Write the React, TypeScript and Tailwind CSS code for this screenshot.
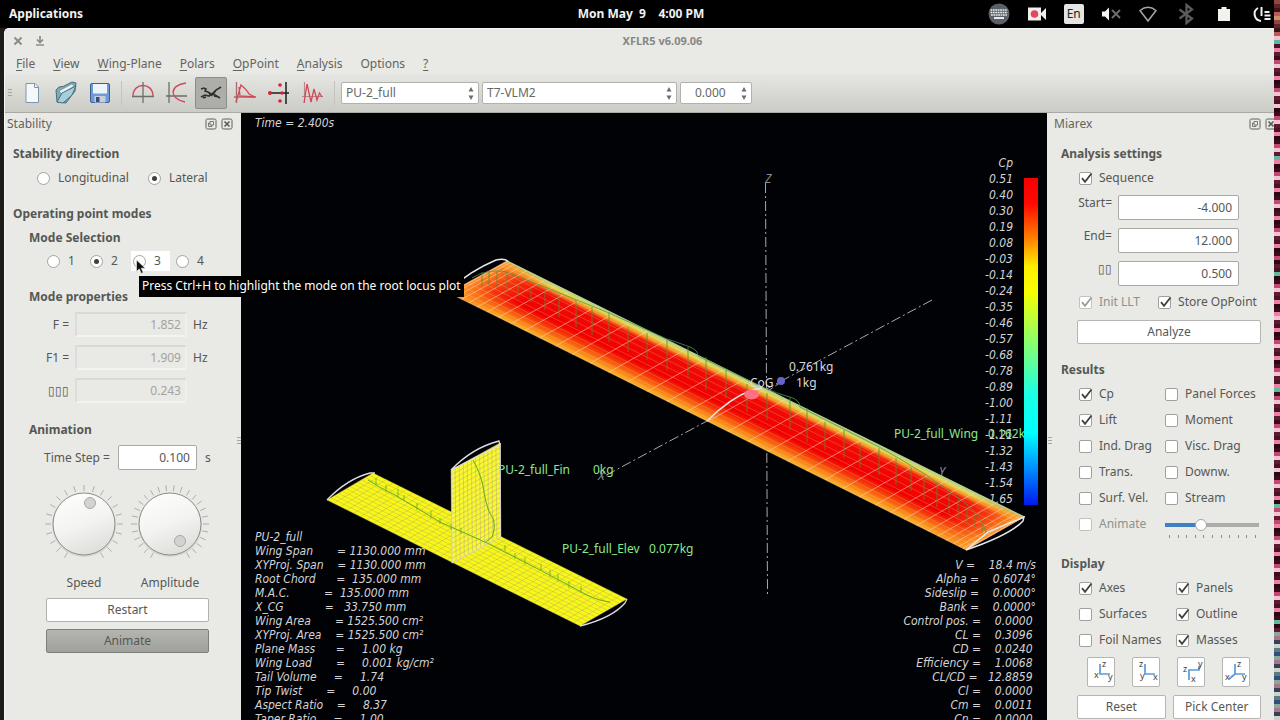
import { useState } from 'react';
import type { ReactNode } from 'react';

interface Point { x: number; y: number }

const MENUS = ['File', 'View', 'Wing-Plane', 'Polars', 'OpPoint', 'Analysis'];

const CP_SCALE = [
  '0.51', '0.40', '0.30', '0.19', '0.08', '-0.03', '-0.14', '-0.24', '-0.35', '-0.46', '-0.57',
  '-0.68', '-0.78', '-0.89', '-1.00', '-1.11', '-1.21', '-1.32', '-1.43', '-1.54', '-1.65',
];

const PLANE_DATA = [
  'PU-2_full',
  'Wing Span       = 1130.000 mm',
  'XYProj. Span    = 1130.000 mm',
  'Root Chord      =  135.000 mm',
  'M.A.C.          =  135.000 mm',
  'X_CG            =   33.750 mm',
  'Wing Area       = 1525.500 cm²',
  'XYProj. Area    = 1525.500 cm²',
  'Plane Mass      =     1.00 kg',
  'Wing Load       =     0.001 kg/cm²',
  'Tail Volume     =     1.74',
  'Tip Twist       =     0.00',
  'Aspect Ratio    =     8.37',
  'Taper Ratio     =     1.00',
];

const RESULT_DATA = [
  'V =    18.4 m/s',
  'Alpha =    0.6074°',
  'Sideslip =    0.0000°',
  'Bank =    0.0000°',
  'Control pos. =    0.0000 ',
  'CL =    0.3096 ',
  'CD =    0.0240 ',
  'Efficiency =    1.0068 ',
  'CL/CD =   12.8859 ',
  'Cl =    0.0000 ',
  'Cm =    0.0011 ',
  'Cn =    0.0000 ',
];

const uniform = (n: number) => Array.from({ length: n + 1 }, (_, i) => i / n);
const cosine = (n: number) => Array.from({ length: n + 1 }, (_, i) => (1 - Math.cos((i * Math.PI) / n)) / 2);

const lerp = (a: Point, b: Point, t: number): Point => ({ x: a.x + (b.x - a.x) * t, y: a.y + (b.y - a.y) * t });

// a-b and d-c are the span edges, a-d and b-c the chords
function meshPath(a: Point, b: Point, c: Point, d: Point, span: number[], chord: number[]) {
  const seg = (p: Point, q: Point) => `M${p.x.toFixed(1)} ${p.y.toFixed(1)}L${q.x.toFixed(1)} ${q.y.toFixed(1)}`;
  return {
    chordLines: span.map((t) => seg(lerp(a, b, t), lerp(d, c, t))).join(''),
    spanLines: chord.map((t) => seg(lerp(a, d, t), lerp(b, c, t))).join(''),
  };
}

const wing = meshPath(
  { x: 507, y: 261 }, { x: 1024, y: 517 }, { x: 966, y: 550 }, { x: 449, y: 293 },
  cosine(40), cosine(13),
);
const elevator = meshPath(
  { x: 373, y: 473 }, { x: 627, y: 599 }, { x: 580, y: 626 }, { x: 327, y: 500 },
  uniform(38), uniform(12),
);
const fin = meshPath(
  { x: 451, y: 470 }, { x: 500, y: 443 }, { x: 501, y: 537 }, { x: 452, y: 563 },
  uniform(12), uniform(19),
);

// x, top and bottom of the local lift vectors
const LIFT: [number, number, number][] = [
  [482, 272, 285], [489, 271, 285], [497, 272, 288], [507, 272, 292], [518, 285, 295], [531, 288, 302],
  [545, 289, 310], [559, 295, 317], [576, 300, 327], [592, 307, 335], [609, 312, 342], [628, 327, 352],
  [647, 333, 360], [667, 340, 370], [688, 347, 378], [706, 357, 390], [726, 370, 398], [747, 384, 412],
  [767, 393, 420], [790, 397, 430], [807, 408, 442], [825, 422, 450], [844, 430, 458], [860, 443, 468],
  [879, 448, 475], [896, 458, 485], [911, 467, 491], [924, 475, 500], [937, 483, 507], [949, 493, 513],
  [958, 500, 518], [967, 507, 524], [975, 515, 528], [982, 523, 533], [986, 530, 535],
];

const STRIP = Array.from({ length: 180 }, (_, i) => {
  const y = i * 4;
  const top = ['#8d4a3a', '#3b1712', '#c98f6d', '#5f2430', '#b85a5e'];
  const mid = ['#3c0b20', '#4a1226', '#c2486f', '#ef7fa3', '#f3c3d0', '#2b0615', '#5e1a30'];
  const low = ['#5d7a80', '#c9d3d0', '#39414f', '#a4788c', '#8ea79b', '#2c4f7c'];
  if (y < 34) return top[(i * 3) % 5];
  if (y < 632) return i % 29 === 10 ? '#5fb8a0' : mid[(i * 2 + (i % 13 === 0 ? 1 : 0)) % 7];
  return low[(i * 5) % 6];
});

function Dock({ title, className, children }: { title: string; className: string; children: ReactNode }) {
  return (
    <section className={`shrink-0 bg-[#e9e9e5] ${className}`}>
      <header className="flex h-[22px] items-center gap-1">
        <h2 className="flex-1 text-[#61645f]">{title}</h2>
        <button aria-label={`Float ${title}`}>
          <svg className="block size-3" viewBox="0 0 12 12" fill="none" stroke="#5d605c">
            <rect x="1" y="1" width="10" height="10" rx="1.5" />
            <path d="M5 3.5h3.5V7H5zM5 5H3.500v3.500H7V7" strokeWidth=".8" />
          </svg>
        </button>
        <button aria-label={`Close ${title}`}>
          <svg className="block size-3" viewBox="0 0 12 12" fill="none" stroke="#5d605c">
            <rect x="1" y="1" width="10" height="10" rx="1.5" />
            <path d="M3.500 3.500l5 5M8.500 3.500l-5 5" strokeWidth="1.700" />
          </svg>
        </button>
      </header>
      {children}
    </section>
  );
}

function Radio({ name, label, checked, onChange, className = '' }: {
  name: string; label: string; checked: boolean; onChange: () => void; className?: string;
}) {
  return (
    <label className={`flex items-center ${className}`}>
      <span className="grid place-items-center">
        <input
          type="radio"
          name={name}
          checked={checked}
          onChange={onChange}
          className="col-start-1 row-start-1 size-[13px] appearance-none rounded-full border border-[#a3a49f] bg-white"
        />
        {checked && <span className="pointer-events-none col-start-1 row-start-1 size-[5px] rounded-full bg-[#3f413e]" />}
      </span>
      {label}
    </label>
  );
}

function Check({ label, on = false, disabled = false }: { label: string; on?: boolean; disabled?: boolean }) {
  const [checked, setChecked] = useState(on);
  return (
    <label className={`flex items-center gap-[7px] whitespace-nowrap ${disabled ? 'text-[#8f918d]' : ''}`}>
      <span className="grid place-items-center">
        <input
          type="checkbox"
          checked={checked}
          disabled={disabled}
          onChange={() => setChecked(!checked)}
          className={`col-start-1 row-start-1 size-[13px] appearance-none rounded-[2px] border bg-white ${
            disabled ? 'border-[#c2c3bf]' : 'border-[#a0a19c]'
          }`}
        />
        {checked && (
          <svg className="pointer-events-none col-start-1 row-start-1 size-[13px] overflow-visible" viewBox="0 0 13 13">
            <path d="M3 6.200l3 3.600L12.500 1.500" fill="none" stroke={disabled ? '#9a9c98' : '#3f413e'} strokeWidth="1.800" />
          </svg>
        )}
      </span>
      {label}
    </label>
  );
}

function Combo({ label, value, className, indent = 'pl-1' }: {
  label: string; value: string; className: string; indent?: string;
}) {
  return (
    <div className={`grid h-[22px] items-center ${className}`}>
      <select
        aria-label={label}
        className={`col-start-1 row-start-1 h-full w-full appearance-none rounded-[2px] border border-[#b1b2ad] bg-white text-[#666965] ${indent}`}
      >
        <option>{value}</option>
      </select>
      <svg className="pointer-events-none col-start-1 row-start-1 mr-1 h-4 w-2 justify-self-end" viewBox="0 0 8 16" fill="#6a6d69">
        <path d="M1.500 6.500L4 2l2.500 4.500zM1.500 10.500L4 15l2.500-4.500z" />
      </svg>
    </div>
  );
}

function Property({ id, label, value, unit }: { id: string; label: string; value: string; unit?: string }) {
  return (
    <div className="flex h-[25px] items-center gap-1.5">
      <label htmlFor={id} className="w-[56px] shrink-0 text-right">{label}</label>
      <input
        id={id}
        disabled
        defaultValue={value}
        className="h-full w-[112px] shrink-0 rounded-[2px] border-2 border-t-[#d8d8d4] border-l-[#dcdcd8] border-r-[#efefec] border-b-[#f3f3f0] bg-[#e9e9e5] pr-1 text-right text-[#a2a4a0]"
      />
      <span>{unit}</span>
    </div>
  );
}

function Dial({ ticks, knobX, knobY }: { ticks: number; knobX: number; knobY: number }) {
  return (
    <svg className="block size-[80px]" viewBox="0 0 80 80">
      <defs>
        <linearGradient id="dial" x1=".3" y1="0" x2=".7" y2="1">
          <stop offset="0" stopColor="#fdfdfc" />
          <stop offset=".5" stopColor="#f3f3f1" />
          <stop offset="1" stopColor="#dcdcd9" />
        </linearGradient>
      </defs>
      {uniform(ticks).map((t) => {
        const a = ((120 + 300 * t) * Math.PI) / 180;
        const c = Math.cos(a);
        const s = Math.sin(a);
        return <path key={t} d={`M${40 + 33 * c} ${40 + 33 * s}L${40 + 39 * c} ${40 + 39 * s}`} stroke="#aeafab" />;
      })}
      <circle cx="40" cy="41" r="32" fill="#c9cac6" opacity=".6" />
      <circle cx="40" cy="40" r="31" fill="url(#dial)" stroke="#8c8e8a" />
      <circle cx={knobX} cy={knobY} r="5.500" fill="#d3d4d0" stroke="#a8aaa6" />
    </svg>
  );
}

function StabilityDock() {
  const [direction, setDirection] = useState('Lateral');
  const [mode, setMode] = useState('2');

  return (
    <Dock title="Stability" className="relative z-10 w-[236px] pr-2 pl-0.5">
      <div className="pl-1.5">
        <h3 className="mt-2 leading-[22px] font-bold">Stability direction</h3>
        <div className="mt-0.5 flex h-[22px] items-center gap-[19px] pl-6">
          {['Longitudinal', 'Lateral'].map((d) => (
            <Radio key={d} name="direction" label={d} checked={direction === d} onChange={() => setDirection(d)} className="gap-2" />
          ))}
        </div>

        <h3 className="mt-3.5 leading-[22px] font-bold">Operating point modes</h3>
        <div className="pl-4">
          <h4 className="mt-0.5 leading-[22px] font-bold">Mode Selection</h4>
          <div className="mt-0.5 flex h-5 items-center gap-1 pl-4">
            {['1', '2', '3', '4'].map((m) => (
              <div key={m} className={m === '3' ? 'relative bg-white' : ''}>
                <Radio
                  name="mode"
                  label={m}
                  checked={mode === m}
                  onChange={() => setMode(m)}
                  className="h-5 w-[39px] gap-2 pl-0.5"
                />
                {m === '3' && (
                  <>
                    <span
                      role="tooltip"
                      className="absolute top-[25px] left-2 h-[21px] bg-black px-[3px] leading-[20px] whitespace-nowrap text-white"
                    >
                      Press Ctrl+H to highlight the mode on the root locus plot
                    </span>
                    <svg className="absolute top-2 left-1 h-4 w-3" viewBox="0 0 12 16">
                      <path d="M1.500 1v11.500l2.800-2.600 1.900 4.500 2-.900-1.900-4.300h4z" fill="#111" stroke="#e8e8e4" strokeWidth=".7" />
                    </svg>
                  </>
                )}
              </div>
            ))}
          </div>

          <h4 className="mt-[15px] leading-[22px] font-bold">Mode properties</h4>
        </div>
        <div className="mt-1 flex flex-col gap-2">
          <Property id="freq" label="F =" value="1.852" unit="Hz" />
          <Property id="freq1" label="F1 =" value="1.909" unit="Hz" />
          <Property id="zeta" label="▯▯▯" value="0.243" />
        </div>

        <div className="pl-4">
          <h4 className="mt-4 leading-[22px] font-bold">Animation</h4>
          <div className="mt-1 flex h-[25px] items-center gap-2 pl-[15px]">
            <label htmlFor="step">Time Step =</label>
            <input
              id="step"
              defaultValue="0.100"
              className="h-full w-[79px] rounded-[2px] border border-[#a9aaa5] bg-white pr-1.5 text-right"
            />
            <span>s</span>
          </div>
          <div className="mt-3.5 flex gap-1.5 pl-[15px]">
            <Dial ticks={20} knobX={46} knobY={19} />
            <Dial ticks={25} knobX={50} knobY={57} />
          </div>
          <div className="mt-2 flex gap-1.5 pl-[15px] text-center leading-[22px]">
            <span className="w-[80px]">Speed</span>
            <span className="w-[80px]">Amplitude</span>
          </div>
          <div className="mt-1 flex flex-col gap-[7px] pr-6 pl-[17px]">
            <button className="h-6 rounded-[2px] border border-[#b1b2ad] bg-white">Restart</button>
            <button className="h-6 rounded-[2px] border border-[#7d7f7a] bg-linear-to-b from-[#b4b5b0] to-[#a0a19c]">Animate</button>
          </div>
        </div>
      </div>
      <Grip className="absolute top-[324px] right-0" />
    </Dock>
  );
}

function Grip({ className = '' }: { className?: string }) {
  return (
    <svg className={`h-2 w-1 ${className}`} viewBox="0 0 4 8" stroke="#a5a6a2">
      <path d="M0 .5h4M0 3.500h4M0 6.500h4" />
    </svg>
  );
}

function Scene() {
  return (
    <svg
      className="absolute inset-0 h-full w-full not-italic [font-stretch:normal]"
      viewBox="241 113 806 607"
      fontFamily="'Noto Sans', sans-serif"
      fontSize="12"
    >
      <defs>
        <linearGradient id="cp" gradientUnits="userSpaceOnUse" x1="507" y1="261" x2="482.600" y2="310.200">
          <stop offset="0" stopColor="#a9d98a" />
          <stop offset=".06" stopColor="#e6d94a" />
          <stop offset=".12" stopColor="#f58a22" />
          <stop offset=".2" stopColor="#f00c06" />
          <stop offset=".6" stopColor="#f00000" />
          <stop offset=".74" stopColor="#f53c08" />
          <stop offset=".88" stopColor="#fa8216" />
          <stop offset="1" stopColor="#f9b824" />
        </linearGradient>
        <linearGradient id="tips" gradientUnits="userSpaceOnUse" x1="507" y1="261" x2="743" y2="676.600">
          <stop offset="0" stopColor="#fb9a20" stopOpacity=".95" />
          <stop offset=".04" stopColor="#fb7a1a" stopOpacity=".45" />
          <stop offset=".09" stopColor="#fb6a1a" stopOpacity="0" />
          <stop offset=".91" stopColor="#fb6a1a" stopOpacity="0" />
          <stop offset=".96" stopColor="#fb7a1a" stopOpacity=".45" />
          <stop offset="1" stopColor="#fba020" stopOpacity=".95" />
        </linearGradient>
        <linearGradient id="scale" x1="0" y1="0" x2="0" y2="1">
          <stop offset="0" stopColor="#f50000" />
          <stop offset=".08" stopColor="#ff0a00" />
          <stop offset=".18" stopColor="#ff7a00" />
          <stop offset=".27" stopColor="#ffee00" />
          <stop offset=".35" stopColor="#f6ff00" />
          <stop offset=".52" stopColor="#7dff7a" />
          <stop offset=".66" stopColor="#1dffe4" />
          <stop offset=".78" stopColor="#00ffff" />
          <stop offset=".88" stopColor="#0096ff" />
          <stop offset="1" stopColor="#0018f0" />
        </linearGradient>
      </defs>

      <g stroke="#a9a9ad" strokeDasharray="10 3 2 3" fill="none">
        <path d="M765.500 183L767.500 594" />
        <path d="M932 300L601 478" />
      </g>
      <g fill="#8d8d90" fontStyle="italic">
        <text x="765" y="183">Z</text>
        <text x="598" y="480">X</text>
        <text x="939" y="476">Y</text>
      </g>

      <path d="M507 261L1024 517L966 550L449 293z" fill="url(#cp)" />
      <path d="M507 261L1024 517L966 550L449 293z" fill="url(#tips)" />
      <path d={wing.spanLines} stroke="#ffc9a0" strokeWidth=".6" opacity=".4" />
      <path d={wing.chordLines} stroke="#ffd0b8" strokeWidth=".9" opacity=".65" />
      <path d="M507 261L1024 517" stroke="#b4cf8b" strokeWidth="1.500" />
      <g stroke="#5c8a2c" fill="none" opacity=".8">
        <path d={LIFT.map(([x, t, b]) => `M${x} ${t}V${b}`).join('')} />
        <path
          d="M472 278Q488 268 507 272Q560 293 609 313L667 339Q682 344 690 347Q698 350 698 356L760 386Q778 394 790 397Q800 400 800 407L879 447Q930 475 958 498Q980 512 986 532"
          stroke="#4f9a4a"
        />
      </g>
      <g stroke="#e6e8ee" fill="none" strokeWidth="1.500">
        <path d="M449 290Q470 271 496 260Q504 258 508 261" />
        <path d="M707 421Q730 398 752 390L762 388" />
        <path d="M966 550Q1010 535 1023 521L1024 517L988 532L966 550" />
      </g>
      <path d="M768 391L781 382" stroke="#a9a9ad" strokeDasharray="6 3" />
      <ellipse cx="751.500" cy="394.500" rx="7.500" ry="5" fill="#ff7182" />
      <circle cx="781" cy="381" r="4" fill="#6664c8" />

      <path d="M373 473L627 599L580 626L327 500z" fill="#f9f716" />
      <path d={elevator.spanLines} stroke="#a8a070" strokeWidth=".6" opacity=".6" />
      <path d={elevator.chordLines} stroke="#a8a070" strokeWidth=".6" opacity=".6" />
      <path d="M451 470L500 443L501 537L452 563z" fill="#fbf92a" />
      <path d={fin.spanLines} stroke="#b0a888" strokeWidth=".7" opacity=".7" />
      <path d={fin.chordLines} stroke="#b0a888" strokeWidth=".7" opacity=".7" />
      <g stroke="#dcdce6" fill="none" strokeWidth="1.300">
        <path d="M327 500Q347 479 370 473L375 473" />
        <path d="M580 626Q612 618 625 603L627 599" />
        <path d="M451 470Q472 448 499 441L500 445L451 470" />
        <path d="M500.500 443V537L452 563V470" strokeWidth=".8" />
      </g>
      <g stroke="#5fae1e" fill="none">
        <path d="M368 480Q380 488 395 495L440 522L487 543L540 570L587 595Q600 601 610 602" />
        <path d="M473 460Q482 476 484 492Q487 511 493 518Q496 528 492 537L486 542" />
        <path
          d="M376 478V485M386 485V492M398 489V497M404 495V501M417 503V510M431 511V518M440 518V524M451 524V530M461 528V534M505 545V551M515 553V559M525 558V564M541 564V570M550 570V577M558 574V581M569 581V588M581 586V593"
          strokeWidth=".8"
        />
      </g>

      <g fill="#8ee88a">
        <text x="498" y="474">PU-2_full_Fin</text>
        <text x="593" y="474">0kg</text>
        <text x="562" y="553">PU-2_full_Elev</text>
        <text x="649" y="553">0.077kg</text>
        <text x="894" y="438">PU-2_full_Wing</text>
        <text x="988" y="438">0.162kg</text>
      </g>
      <g fill="#d9d9dc">
        <text x="789" y="371">0.761kg</text>
        <text x="796" y="387">1kg</text>
        <text x="750" y="387">CoG</text>
      </g>
      <rect x="1024" y="178" width="14" height="327" fill="url(#scale)" />
      <rect x="1038" y="420" width="9" height="24" fill="#010206" />
    </svg>
  );
}

function View3D() {
  return (
    <main className="relative flex min-w-0 flex-1 justify-between overflow-hidden bg-[#010206] font-['DejaVu_Sans_Condensed','DejaVu_Sans',sans-serif] text-[12px] text-[#d4d4d6] italic [font-stretch:condensed]">
      <div className="flex flex-col justify-between pl-3.5 leading-[14px] whitespace-pre">
        <p className="mt-[3px]">Time = 2.400s</p>
        <div className="-mb-1.5">
          {PLANE_DATA.map((line) => <p key={line}>{line}</p>)}
        </div>
      </div>
      <div className="flex flex-col justify-between text-right whitespace-pre">
        <div className="mt-[42px] pr-[34px] leading-4">
          <p>Cp</p>
          {CP_SCALE.map((v) => <p key={v}>{v}</p>)}
        </div>
        <div className="-mb-1.5 pr-[11px] leading-[14px]">
          {RESULT_DATA.map((line) => <p key={line}>{line}</p>)}
        </div>
      </div>
      <Scene />
    </main>
  );
}

const AXES = [
  { name: 'Y view', d: 'M12 6v10h10', labels: [['z', 14, 9], ['x', 6, 20], ['y', 20, 22]] },
  { name: 'X view', d: 'M12 6v10h10', labels: [['z', 6, 9], ['y', 7, 21], ['x', 20, 22]] },
  { name: 'Z view', d: 'M11 22V12h10V8', labels: [['z', 5, 14], ['y', 20, 9], ['x', 13, 24]] },
  { name: 'Iso view', d: 'M12 6v10h10M12 16l-6 5', labels: [['z', 14, 9], ['x', 2, 22], ['y', 19, 22]] },
] as const;

function MiarexDock() {
  const fields = [
    { id: 'start', label: 'Start=', value: '-4.000' },
    { id: 'end', label: 'End=', value: '12.000' },
    { id: 'delta', label: '▯▯', value: '0.500' },
  ];
  const button = 'h-6 rounded-[2px] border border-[#b5b6b1] bg-white';

  return (
    <Dock title="Miarex" className="relative w-[233px] pr-[3px] pl-[7px]">
      <div className="pr-4 pl-[7px]">
        <h3 className="mt-2 leading-[22px] font-bold">Analysis settings</h3>
        <div className="pl-4">
          <div className="mt-0.5 flex h-[22px] items-center pl-0.5"><Check label="Sequence" on /></div>
          <div className="mt-1.5 flex flex-col gap-2">
            {fields.map((f) => (
              <div key={f.id} className="flex h-[25px] gap-1.5">
                <label htmlFor={f.id} className="w-[35px] text-right leading-[15px]">{f.label}</label>
                <input
                  id={f.id}
                  defaultValue={f.value}
                  className="w-[121px] rounded-[2px] border border-[#a9aaa5] bg-white pr-1.5 text-right"
                />
              </div>
            ))}
          </div>
          <div className="mt-[5px] flex h-[22px] items-center gap-[18px] pl-0.5">
            <Check label="Init LLT" on disabled />
            <Check label="Store OpPoint" on />
          </div>
          <button className={`mt-[7px] w-full ${button}`}>Analyze</button>
        </div>

        <h3 className="mt-[15px] leading-[22px] font-bold">Results</h3>
        <div className="grid auto-rows-[26px] grid-cols-[86px_1fr] items-center pl-[18px]">
          <Check label="Cp" on />
          <Check label="Panel Forces" />
          <Check label="Lift" on />
          <Check label="Moment" />
          <Check label="Ind. Drag" />
          <Check label="Visc. Drag" />
          <Check label="Trans." />
          <Check label="Downw." />
          <Check label="Surf. Vel." />
          <Check label="Stream" />
          <Check label="Animate" disabled />
          <div className="flex flex-col pt-2">
            <input
              type="range"
              aria-label="Animation speed"
              defaultValue={37}
              className="h-3 w-[94px] appearance-none bg-linear-to-r from-[#3f7fc4] from-38% to-[#acada9] to-38% bg-[length:100%_4px] bg-center bg-no-repeat [&::-webkit-slider-thumb]:size-3 [&::-webkit-slider-thumb]:appearance-none [&::-webkit-slider-thumb]:rounded-full [&::-webkit-slider-thumb]:border [&::-webkit-slider-thumb]:border-[#a5a6a2] [&::-webkit-slider-thumb]:bg-white"
            />
            <svg className="mt-1 h-[3px] w-[94px]" viewBox="0 0 94 3" stroke="#8b8d89">
              <path d={uniform(10).map((t) => `M${Math.round(4 + 86 * t) + 0.5} 0v3`).join('')} />
            </svg>
          </div>
        </div>

        <h3 className="mt-4 leading-[22px] font-bold">Display</h3>
        <div className="grid auto-rows-[26px] grid-cols-[97px_1fr] items-center pl-[18px]">
          <Check label="Axes" on />
          <Check label="Panels" on />
          <Check label="Surfaces" />
          <Check label="Outline" on />
          <Check label="Foil Names" />
          <Check label="Masses" on />
        </div>
        <div className="mt-1 flex gap-[17px] pl-[26px]">
          {AXES.map((a) => (
            <button key={a.name} aria-label={a.name} className="rounded-[2px] border border-[#b5b6b1] bg-white">
              <svg className="block h-7 w-[26px]" viewBox="0 0 26 28" fontSize="9" fill="#3f413e">
                <path d={a.d} fill="none" stroke="#5a9ad8" strokeWidth="1.700" />
                {a.labels.map(([t, x, y]) => <text key={t} x={x} y={y}>{t}</text>)}
              </svg>
            </button>
          ))}
        </div>
        <div className="mt-2 grid grid-cols-2 gap-[7px] pl-4">
          <button className={button}>Reset</button>
          <button className={button}>Pick Center</button>
        </div>
      </div>
      <Grip className="absolute top-[324px] left-px" />
    </Dock>
  );
}

function TopBar() {
  return (
    <header className="grid h-7 shrink-0 grid-cols-3 items-center bg-black pr-[7px] pl-[9px] text-[12px] font-bold text-[#f2f2f2]">
      <button className="justify-self-start">Applications</button>
      <time className="justify-self-center whitespace-pre">{'Mon May  9    4:00 PM'}</time>
      <div className="flex w-[285px] items-center justify-between justify-self-end">
        <svg className="size-[22px]" viewBox="0 0 22 22">
          <circle cx="11" cy="11" r="10.500" fill="#5b6068" />
          <path d="M2.500 7h17M2.500 9.500h17M3 12h16" stroke="#e8eaee" strokeWidth="1.600" strokeDasharray="1.800 .6" />
          <path d="M6 15h10" stroke="#fff" strokeWidth="1.700" />
        </svg>
        <svg className="size-[22px]" viewBox="0 0 22 22">
          <rect x="2" y="4.500" width="13" height="13" fill="#f2eeee" />
          <path d="M15 10l5-5v12l-5-5z" fill="#f2eeee" />
          <circle cx="8.500" cy="11" r="3.800" fill="#e0485c" />
        </svg>
        <span className="grid h-5 w-5 place-items-center rounded-[2px] bg-[#e4e4e2] font-normal text-[#222]">En</span>
        <svg className="size-[22px]" viewBox="0 0 22 22" fill="none">
          <path d="M2 8.500h3l4-4v13l-4-4H2z" fill="#f4f4f4" />
          <path d="M12 7l8 8M20 7l-8 8" stroke="#6e6e6e" strokeWidth="1.800" />
        </svg>
        <svg className="size-[22px]" viewBox="0 0 22 22">
          <path d="M3 7.500Q11 1 19 7.500L11 18z" fill="none" stroke="#a4a4a4" strokeWidth="1.500" />
        </svg>
        <svg className="size-[22px]" viewBox="0 0 22 22">
          <path d="M4.500 6.500L17 15.500L11.500 20V2L17 6.500L4.500 15.500" fill="none" stroke="#5c5c5c" strokeWidth="2.300" />
        </svg>
        <svg className="size-[22px]" viewBox="0 0 22 22" fill="#f2f2ee">
          <path d="M5 6h3.500V4h5v2H17v12H5z" />
        </svg>
        <svg className="size-[22px]" viewBox="0 0 22 22" fill="none" stroke="#f2f2f2" strokeWidth="2">
          <path d="M7 5a7 7 0 0 0 3 13M10.500 4v9M13.500 9h5M13.500 12.500h6M13.500 16h6" />
        </svg>
      </div>
    </header>
  );
}

function ToolButton({ label, active = false, children }: { label: string; active?: boolean; children: ReactNode }) {
  return (
    <button
      aria-label={label}
      className={`grid h-8 w-8 place-items-center rounded-[2px] border ${
        active ? 'border-[#8b8d88] bg-[#adaea9]' : 'border-transparent'
      }`}
    >
      <svg className="block size-6" viewBox="0 0 24 24" fill="none">{children}</svg>
    </button>
  );
}

function Toolbar() {
  return (
    <div className="flex h-[39px] items-center border-b border-[#a9aaa6] bg-linear-to-b from-[#e6e6e2] to-[#cbccc6] pl-[3px]">
      <Grip />
      <div className="ml-1 flex gap-0.5">
        <ToolButton label="New">
          <path d="M6 2.500h9l3.500 3.500v15.500H6z" fill="#f4f8fb" stroke="#7e96ab" />
          <path d="M14.500 2.500v4h4" stroke="#7e96ab" />
        </ToolButton>
        <ToolButton label="Open">
          <path d="M2 9l3-3 4-.5L18 1l4 1-1 8-9 12-9-1z" fill="#7fa9b8" stroke="#466f80" />
          <path d="M5 10l13-7 2 2-12 8z" fill="#edf3f5" stroke="#6f8b96" strokeWidth=".6" />
          <path d="M3 21l5-9 14-7-4 9-9 8z" fill="#a8cfdd" stroke="#466f80" />
        </ToolButton>
        <ToolButton label="Save">
          <rect x="2.500" y="2.500" width="19" height="19" rx="1.500" fill="#6b9bd8" stroke="#3d5f96" />
          <rect x="5" y="3" width="14" height="9.500" fill="#eef3fa" />
          <rect x="6.500" y="15" width="11" height="6.500" fill="#c9ced6" />
          <rect x="8" y="16" width="3.500" height="5" fill="#2e4d80" />
        </ToolButton>
      </div>
      <span className="mx-[5px] h-6 w-px bg-[#c3c4bf]" />
      <div className="flex gap-0.5">
        <ToolButton label="Foil direct design">
          <path d="M12 1v21M1 15.500h22" stroke="#6c6e6a" strokeWidth="1.300" />
          <path d="M2 15C2 1 22 1 22 15" stroke="#d04a5a" strokeWidth="1.400" />
        </ToolButton>
        <ToolButton label="Polar view">
          <path d="M4 1v21M1 15h21" stroke="#6c6e6a" strokeWidth="1.300" />
          <path d="M21 2C4 4 4 18 20 21" stroke="#d04a5a" strokeWidth="1.400" />
        </ToolButton>
        <ToolButton label="3D view" active>
          <path d="M2 8l3-1 2 1-1 2 3 1 3 2 3-1 2-3 5-3M2 16l4-2 4 1 2-2 4 1 5 3M4 17l3-1M9 11l4 4M13 13l4-4M15 15l5 1" stroke="#2e302d" strokeWidth="1.600" />
        </ToolButton>
        <ToolButton label="Root locus">
          <path d="M3.500 1v21M1 16h22" stroke="#a9666c" strokeWidth="1.300" />
          <path d="M3 21L8 4Q14 9 16 13L22 16L7 15L6 6" stroke="#d04a5a" strokeWidth="1.300" />
        </ToolButton>
        <ToolButton label="Stability view">
          <path d="M19 1v22" stroke="#1d1d1d" strokeWidth="1.500" />
          <path d="M2 12h20" stroke="#1d1d1d" strokeWidth="1.500" />
          <g fill="#d9222f">
            <circle cx="3" cy="12" r="2" />
            <circle cx="13" cy="4" r="1.800" />
            <circle cx="13" cy="20" r="1.800" />
            <circle cx="15" cy="12" r="1.800" />
          </g>
        </ToolButton>
        <ToolButton label="Time response">
          <path d="M3.500 1v21M1 15.500h21" stroke="#b9868a" strokeWidth="1.100" />
          <path d="M3 22L6 3L10 21L13 8L16 19L18.500 12L21 16" stroke="#d04a5a" strokeWidth="1.300" />
        </ToolButton>
      </div>
      <span className="mr-1.5 ml-[5px] h-6 w-px bg-[#c3c4bf]" />
      <div className="flex gap-[3px]">
        <Combo label="Plane" value="PU-2_full" className="w-[138px]" />
        <Combo label="Polar" value="T7-VLM2" className="w-[195px]" />
        <Combo label="Operating point" value="0.000" className="w-[72px]" indent="pl-3.5" />
      </div>
    </div>
  );
}

export default function App() {
  return (
    <div className="relative flex h-screen flex-col overflow-hidden bg-[#1d1c1b] font-['Noto_Sans','Open_Sans',sans-serif] text-[12px] text-[#555854]">
      <TopBar />
      <div className="ml-1 flex min-h-0 flex-1 flex-col overflow-hidden rounded-tl-[5px] border-t border-l border-[#f6f6f4] bg-[#e9e9e5]">
        <div className="flex h-6 items-center pl-2">
          <button aria-label="Close window">
            <svg className="block size-2.5" viewBox="0 0 10 10" stroke="#8b8d89" strokeWidth="2"><path d="M1.500 1.500l7 7M8.500 1.500l-7 7" /></svg>
          </button>
          <button aria-label="Minimize window" className="ml-3">
            <svg className="block size-2.5" viewBox="0 0 10 10" fill="none" stroke="#8b8d89" strokeWidth="1.700"><path d="M5 0v6M2 3.500l3 3 3-3M1 9h8" /></svg>
          </button>
          <h1 className="flex-1 text-center text-[11px] font-bold text-[#868884]">XFLR5 v6.09.06</h1>
        </div>
        <nav className="flex h-[21px] items-center gap-[18px] pl-[11px] text-[#61645f]">
          {MENUS.map((m) => (
            <button key={m}><u className="underline-offset-2">{m[0]}</u>{m.slice(1)}</button>
          ))}
          <button>Options</button>
          <button><u className="underline-offset-2">?</u></button>
        </nav>
        <Toolbar />
        <div className="flex min-h-0 flex-1">
          <StabilityDock />
          <View3D />
          <MiarexDock />
        </div>
      </div>
      <svg className="absolute inset-y-0 right-0 z-20 h-full w-[6px]" viewBox="0 0 6 720" preserveAspectRatio="none">
        {STRIP.map((color, i) => <rect key={i} y={i * 4} width="6" height="4" fill={color} />)}
      </svg>
    </div>
  );
}
